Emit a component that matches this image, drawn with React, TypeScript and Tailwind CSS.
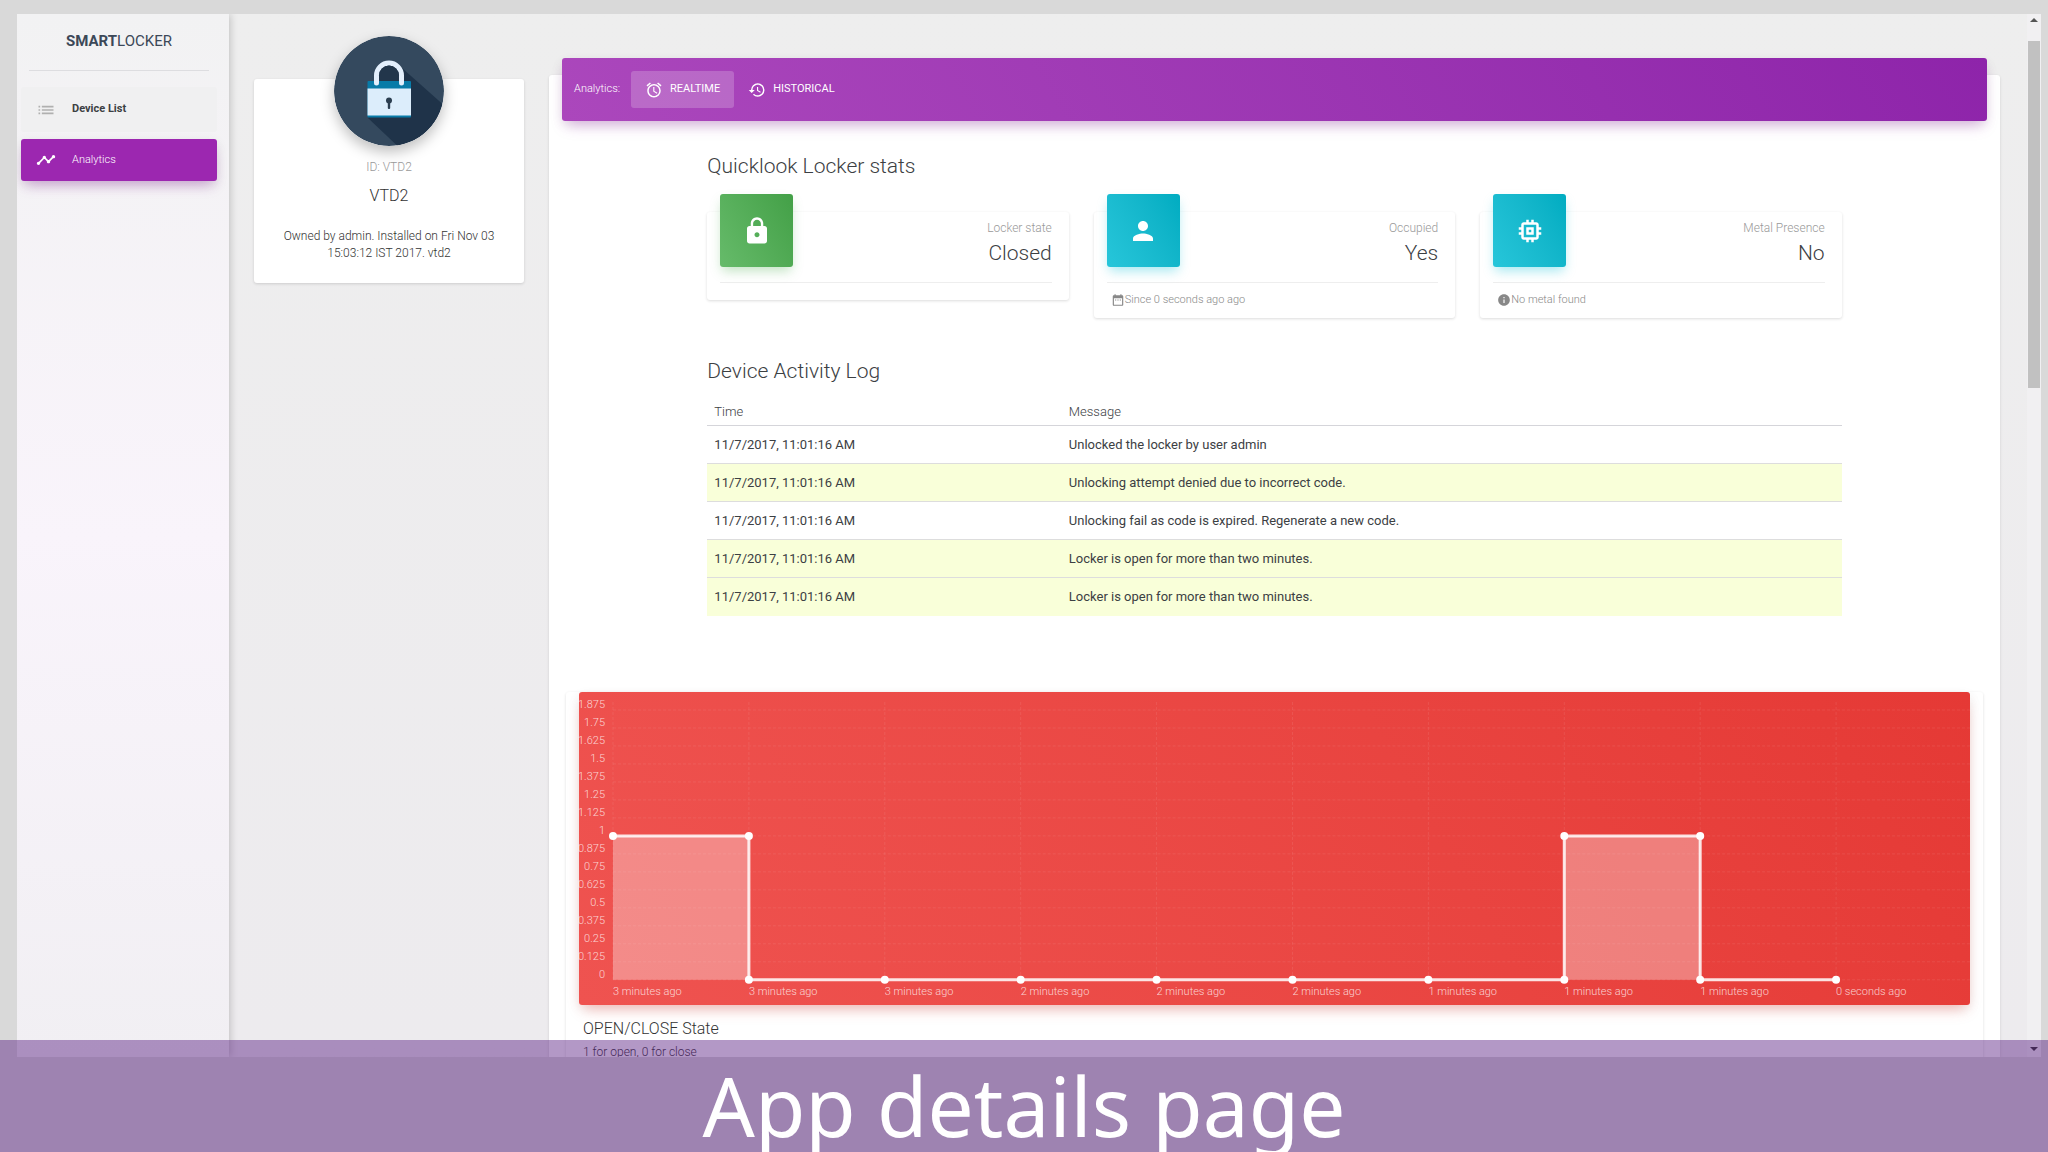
import clsx from "clsx";
import {
  MdAccessAlarm,
  MdDateRange,
  MdHistory,
  MdInfo,
  MdList,
  MdLock,
  MdMemory,
  MdPerson,
  MdTimeline,
} from "react-icons/md";
import type { IconType } from "react-icons";

// ── Data ──

interface Stat {
  label: string;
  value: string;
  icon: IconType;
  tone: "green" | "cyan";
  note?: string;
  noteIcon?: IconType;
}

const stats: Stat[] = [
  { label: "Locker state", value: "Closed", icon: MdLock, tone: "green" },
  {
    label: "Occupied",
    value: "Yes",
    icon: MdPerson,
    tone: "cyan",
    note: "Since 0 seconds ago ago",
    noteIcon: MdDateRange,
  },
  {
    label: "Metal Presence",
    value: "No",
    icon: MdMemory,
    tone: "cyan",
    note: "No metal found",
    noteIcon: MdInfo,
  },
];

const activity = [
  { time: "11/7/2017, 11:01:16 AM", message: "Unlocked the locker by user admin", warn: false },
  { time: "11/7/2017, 11:01:16 AM", message: "Unlocking attempt denied due to incorrect code.", warn: true },
  { time: "11/7/2017, 11:01:16 AM", message: "Unlocking fail as code is expired. Regenerate a new code.", warn: false },
  { time: "11/7/2017, 11:01:16 AM", message: "Locker is open for more than two minutes.", warn: true },
  { time: "11/7/2017, 11:01:16 AM", message: "Locker is open for more than two minutes.", warn: true },
];

const samples = [
  { label: "3 minutes ago", open: 1 },
  { label: "3 minutes ago", open: 0 },
  { label: "3 minutes ago", open: 0 },
  { label: "2 minutes ago", open: 0 },
  { label: "2 minutes ago", open: 0 },
  { label: "2 minutes ago", open: 0 },
  { label: "1 minutes ago", open: 0 },
  { label: "1 minutes ago", open: 1 },
  { label: "1 minutes ago", open: 0 },
  { label: "0 seconds ago", open: 0 },
];

// ── Sidebar ──

function Sidebar() {
  return (
    <aside className="z-10 w-[212px] shrink-0 bg-linear-to-b from-[#f2f2f3] via-[#f9f4fb] to-[#f1eff3] px-1 shadow-[1px_0_8px_rgba(0,0,0,0.2)]">
      <div className="mr-4 ml-2 border-b border-[#dddde0] pt-[15px] pb-[17px] text-center text-[15px] leading-6 text-[#3c4858]">
        <span className="font-bold">SMART</span>LOCKER
      </div>
      <nav className="mt-4 mr-2 flex flex-col gap-[7px] text-[11px]">
        <a href="#devices" className="flex h-[45px] items-center gap-4 rounded-[3px] bg-[#f0f0f1] pl-[15px] font-bold text-[#3c4043]">
          <MdList size={20} className="text-[#b0b0b0]" />
          Device List
        </a>
        <a
          href="#analytics"
          className="flex h-[42px] items-center gap-4 rounded-[3px] bg-[#9c27b0] pl-[15px] font-light text-white shadow-[0_8px_14px_-5px_rgba(156,39,176,0.35),0_4px_12px_rgba(0,0,0,0.1)]"
        >
          <MdTimeline size={20} />
          Analytics
        </a>
      </nav>
    </aside>
  );
}

// ── Profile card ──

function LockBadge() {
  return (
    <svg viewBox="0 0 110 110" className="-mt-[43px] size-[110px] rounded-full shadow-[0_6px_14px_rgba(0,0,0,0.25)]">
      <circle cx="55" cy="55" r="55" fill="#34495e" />
      <path d="M68 32 108.5 68A55 55 0 0 1 63 109.5L34 82Z" fill="#1f3349" />
      <rect x="33.5" y="45" width="43.5" height="36.5" rx="1" fill="#087ba8" />
      <rect x="33.5" y="52.5" width="43.5" height="27" fill="#dcedfb" />
      <path
        d="M42.5 47V39.5a12.5 12.5 0 0 1 25 0V47"
        fill="none"
        stroke="#e3effc"
        strokeWidth="5"
        strokeLinecap="round"
      />
      <path d="M45 45V39.5a10 10 0 0 1 20 0V45Z" fill="#22364b" />
      <circle cx="55" cy="64.5" r="3" fill="#2b3e50" />
      <rect x="53.8" y="65" width="2.4" height="8" rx="1" fill="#2b3e50" />
    </svg>
  );
}

function ProfileCard() {
  return (
    <section className="mt-[65px] flex w-[270px] shrink-0 flex-col items-center self-start rounded-[3px] bg-white pb-[21px] text-center text-[#333] shadow-[0_1px_3px_rgba(0,0,0,0.14)]">
      <LockBadge />
      <h6 className="mt-[11px] text-xs leading-5 font-light text-[#999]">ID: VTD2</h6>
      <h4 className="mt-[7px] text-base leading-6 font-light">VTD2</h4>
      <p className="mt-5 px-6 text-xs leading-[17px] font-light">
        Owned by admin. Installed on Fri Nov 03 15:03:12 IST 2017. vtd2
      </p>
    </section>
  );
}

// ── Stats ──

function StatCard({ stat }: { stat: Stat }) {
  const Icon = stat.icon;
  const NoteIcon = stat.noteIcon;
  return (
    <article className="self-start rounded-[3px] bg-white px-[13px] pb-[9px] font-light shadow-[0_1px_3px_rgba(0,0,0,0.14)]">
      <div className="flex justify-between pr-1">
        <div
          className={clsx(
            "-mt-[18px] grid size-[73px] place-items-center rounded-[3px] text-white",
            stat.tone === "green"
              ? "bg-linear-60 from-[#66bb6a] to-[#43a047] shadow-[0_6px_12px_-2px_rgba(76,175,80,0.35)]"
              : "bg-linear-60 from-[#26c6da] to-[#00acc1] shadow-[0_6px_12px_-2px_rgba(0,188,212,0.35)]"
          )}
        >
          <Icon size={30} />
        </div>
        <div className="pt-2 text-right">
          <p className="text-xs leading-4 text-[#999]">{stat.label}</p>
          <h3 className="text-[21px] leading-[34px] text-[#3c4043]">{stat.value}</h3>
        </div>
      </div>
      <div className="mt-3 mr-1 border-t border-[#eee] pt-2">
        {stat.note && NoteIcon && (
          <p className="flex items-center pl-1 text-[11px] leading-[18px] text-[#888]">
            <NoteIcon size={14} />
            {stat.note}
          </p>
        )}
      </div>
    </article>
  );
}

// ── Activity log ──

function ActivityLog() {
  return (
    <table className="mt-3 w-full table-fixed text-left text-[13px] text-[#3c4043]">
      <thead>
        <tr className="border-b border-[#d5d5da] leading-[26px]">
          <th className="w-5/16 pl-[7px] font-light">Time</th>
          <th className="pl-[7px] font-light">Message</th>
        </tr>
      </thead>
      <tbody>
        {activity.map((row, i) => (
          <tr
            key={i}
            className={clsx("h-[38px] border-b border-[#dddddd] last:border-0", row.warn && "bg-[#f9ffd9]")}
          >
            <td className="pl-[7px]">{row.time}</td>
            <td className="pl-[7px]">{row.message}</td>
          </tr>
        ))}
      </tbody>
    </table>
  );
}

// ── Open/close chart ──

const X0 = 34;
const STEP = 136;
const BASE = 288;
const UNIT = 144;
const ticks = Array.from({ length: 16 }, (_, i) => i * 0.125);

function StateChart() {
  const xAt = (i: number) => X0 + i * STEP;
  const yAt = (v: number) => BASE - v * UNIT;

  // A change of state gets a vertical edge, with a dot at both of its ends
  const points = samples.flatMap((s, i) => {
    const prev = samples[i - 1];
    const here = { x: xAt(i), y: yAt(s.open) };
    return prev && prev.open !== s.open ? [{ x: xAt(i), y: yAt(prev.open) }, here] : [here];
  });
  const line = "M" + points.map((p) => `${p.x} ${p.y}`).join("L");

  return (
    <svg viewBox="0 0 1392 314" className="block w-full overflow-visible" role="img">
      <g stroke="#fff" strokeOpacity="0.09" strokeDasharray="3 2">
        {ticks.map((t) => (
          <line key={t} x1={X0} x2="1392" y1={yAt(t)} y2={yAt(t)} />
        ))}
        {samples.map((_, i) => (
          <line key={i} x1={xAt(i)} x2={xAt(i)} y1="10" y2={BASE} />
        ))}
      </g>
      <g fill="#fff" fillOpacity="0.75" fontSize="11" fontWeight="300">
        {ticks.map((t) => (
          <text key={t} x="26" y={yAt(t) - 2} textAnchor="end">
            {t}
          </text>
        ))}
        {samples.map((s, i) => (
          <text key={i} x={xAt(i)} y="303">
            {s.label}
          </text>
        ))}
      </g>
      <path d={`${line}V${BASE}H${X0}Z`} fill="#fff" fillOpacity="0.33" />
      <path d={line} fill="none" stroke="#fff" strokeOpacity="0.85" strokeWidth="3" />
      {points.map((p, i) => (
        <circle key={i} cx={p.x} cy={p.y} r="4" fill="#fff" />
      ))}
    </svg>
  );
}

// ── Page ──

export default function App() {
  return (
    <div className="relative flex h-screen flex-col overflow-hidden bg-[#d9d9d9] pt-[14px] pr-[7px] pb-[95px] pl-[17px] font-[Roboto,sans-serif]">
      <div className="flex min-h-0 flex-1 overflow-hidden bg-linear-to-b from-[#eeeeee] to-[#edebee]">
        <Sidebar />
        <main className="flex min-w-0 flex-1 gap-[25px] pr-[27px] pl-[25px]">
          <ProfileCard />
          <section className="mt-[61px] min-w-0 flex-1 rounded-t-[3px] bg-white px-[13px] shadow-[0_1px_3px_rgba(0,0,0,0.12)]">
            <header className="-mt-[17px] flex h-[63px] items-center rounded-[3px] bg-linear-60 from-[#ab47bc] to-[#8e24aa] px-3 text-[11px] font-light text-white shadow-[0_8px_14px_-5px_rgba(156,39,176,0.35),0_4px_12px_rgba(0,0,0,0.08)]">
              <span className="mr-[11px]">Analytics:</span>
              <button className="flex h-[37px] items-center gap-[7px] rounded-[3px] bg-white/20 px-[14px] text-[11px] font-normal">
                <MdAccessAlarm size={18} />
                REALTIME
              </button>
              <button className="flex h-[37px] items-center gap-[7px] rounded-[3px] px-[14px] text-[11px] font-normal">
                <MdHistory size={18} />
                HISTORICAL
              </button>
            </header>

            <div className="px-[10.2%] text-[#3c4043]">
              <h3 className="mt-[29px] text-[21px] leading-8 font-light">Quicklook Locker stats</h3>
              <div className="mt-[30px] grid grid-cols-3 gap-[25px]">
                {stats.map((stat) => (
                  <StatCard key={stat.label} stat={stat} />
                ))}
              </div>
              <h3 className="mt-[37px] text-[21px] leading-8 font-light">Device Activity Log</h3>
              <ActivityLog />
            </div>

            <article className="mx-1 mt-[94px] rounded-[3px] px-[13px] pb-6 shadow-[0_1px_3px_rgba(0,0,0,0.14)]">
              <div className="-mt-[18px] rounded-[3px] bg-linear-60 from-[#ef5350] to-[#e53935] shadow-[0_8px_14px_-5px_rgba(244,67,54,0.35),0_4px_12px_rgba(0,0,0,0.08)]">
                <StateChart />
              </div>
              <h4 className="mt-3 pl-1 text-base leading-6 font-light text-[#333]">OPEN/CLOSE State</h4>
              <p className="pl-1 text-xs leading-[22px] font-light text-[#333]">1 for open, 0 for close</p>
            </article>
          </section>
        </main>

        {/* Scroll bar */}
        <div className="flex w-[14px] flex-col items-center bg-[#f1f0f2]">
          <span className="mt-1 border-x-4 border-b-4 border-x-transparent border-b-[#555]" />
          <span className="mt-[19px] h-[347px] w-3 bg-[#c1c1c1]" />
          <span className="mt-auto mb-[6px] border-x-4 border-t-4 border-x-transparent border-t-[#333]" />
        </div>
      </div>

      {/* Caption band */}
      <div className="absolute inset-x-0 bottom-0 z-20 flex h-28 justify-center overflow-hidden bg-[rgba(86,26,128,0.45)]">
        <h1 className="font-['Noto_Sans',sans-serif] text-[82px] leading-[130px] whitespace-nowrap text-white">
          App details page
        </h1>
      </div>
    </div>
  );
}
